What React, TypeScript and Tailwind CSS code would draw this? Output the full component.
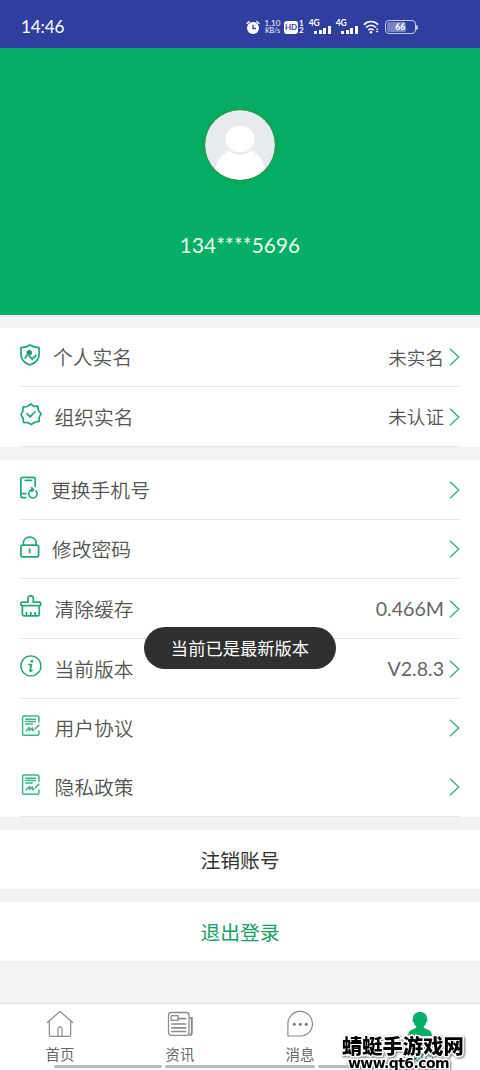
import React from "react";

type RowItem = {
  label: string;
  icon: React.ReactNode;
  gap: string;
  height: string;
  value?: string;
  latin?: boolean;
  divider?: boolean;
};

function RowIcon({ children }: { children: React.ReactNode }) {
  return (
    <svg
      className="mb-[3px] h-6 w-6 shrink-0"
      viewBox="0 0 24 24"
      fill="none"
      stroke="#22a873"
      strokeWidth="1.75"
      strokeLinecap="round"
      strokeLinejoin="round"
    >
      {children}
    </svg>
  );
}

function ShieldIcon() {
  return (
    <RowIcon>
      <path d="M10 .9C7.500 2.500 4.500 3.300 1 3.600V11c0 4.800 3.500 8 9 10 5.500-2 9-5.200 9-10V3.600C15.500 3.300 12.500 2.500 10 .9Z" />
      <circle cx="9.300" cy="8.600" r="2.700" fill="#129c62" stroke="none" />
      <path d="M5.300 14.200c.3-2 1.500-3.100 3.200-3.400M9.500 12.400l2.700 2.600 3.700-3.500" />
    </RowIcon>
  );
}

function SealIcon() {
  return (
    <RowIcon>
      <path d="M10.800 1l3 2.300 4-.1.500 4L21 10.800l-1.900 3.600.1 3.900-4 .7-3.900 2.600-3.600-2-4.200-.3-.4-4L.9 11.600l2-3.500L3 4.200l4.200-.7L10.800 1Z" />
      <path d="M7.200 10.800l3 3 4.600-4.800" />
    </RowIcon>
  );
}

function PhoneIcon() {
  return (
    <RowIcon>
      <path d="M15.200 10.500V3.200c0-1.300-.6-1.900-1.900-1.900H2.800C1.500 1.300.9 1.900.9 3.200v16.600c0 1.300.6 1.900 1.900 1.900h3M1.200 17.600h4.800M5.300 4.300h6.200" />
      <path d="M15.900 14.800a4.200 4.200 0 1 1-3.200-1.200M11.600 11.800l2.100 1.800-1.900 1.900" strokeWidth="1.600" />
    </RowIcon>
  );
}

function LockIcon() {
  return (
    <RowIcon>
      <rect x=".9" y="9" width="17.700" height="11.900" rx="1.800" />
      <path d="M3.400 9V7.300C3.400 3.600 6 1 9.700 1s6.400 2.600 6.400 6.300V9M9.700 13.200v3.400" />
    </RowIcon>
  );
}

function BrushIcon() {
  return (
    <RowIcon>
      <path d="M8 7.200V3.100C8 1.700 9.100.8 10.700.8s2.600.9 2.600 2.300v4.100h6.100c.9 0 1.300.4 1.300 1.200v1c0 .8-.4 1.200-1.300 1.200H2.200C1.300 10.600.9 10.200.9 9.400v-1c0-.8.4-1.200 1.300-1.200H8ZM2.400 10.600v8.700c0 1 .5 1.600 1.500 1.600h13.900c1 0 1.500-.6 1.500-1.600v-8.700M6.500 17.500v3M10.800 17.500v3M15.100 17.500v3" />
    </RowIcon>
  );
}

function InfoIcon() {
  return (
    <RowIcon>
      <circle cx="10.900" cy="10.900" r="10" strokeWidth="1.400" />
      <circle cx="12" cy="6.300" r="1.400" fill="#22a873" stroke="none" />
      <path d="M9.200 9.700h2.200l-1.400 5.800c-.2.900.7.700 2-.2" />
    </RowIcon>
  );
}

function DocIcon() {
  return (
    <RowIcon>
      <g stroke="#3bb483" strokeWidth="1.500">
        <path d="M18.900 7.300V2.200c0-.8-.4-1.200-1.200-1.200H3.800C3 1 2.600 1.400 2.600 2.200v16.900c0 .8.4 1.200 1.200 1.200h13.900c.8 0 1.200-.4 1.200-1.200v-3" />
        <path d="M5.700 4.300h9.800M5.700 6.600h9.800M5.700 8.900h6.500M6.200 15.800l3.200-3.300.1 3 2.900-2.600.2 2.700 1.300-.6M15.200 13.800l3.700-3.700" />
      </g>
    </RowIcon>
  );
}

const identityRows: RowItem[] = [
  { label: "个人实名", icon: <ShieldIcon />, gap: "ml-[9px]", height: "h-[59px]", value: "未实名", divider: true },
  { label: "组织实名", icon: <SealIcon />, gap: "ml-[10.5px]", height: "h-[60px]", value: "未认证", divider: true },
];

const settingRows: RowItem[] = [
  { label: "更换手机号", icon: <PhoneIcon />, gap: "ml-[7px]", height: "h-[60px]", divider: true },
  { label: "修改密码", icon: <LockIcon />, gap: "ml-2", height: "h-[59px]", divider: true },
  { label: "清除缓存", icon: <BrushIcon />, gap: "ml-[10.5px]", height: "h-[60px]", value: "0.466M", latin: true, divider: true },
  { label: "当前版本", icon: <InfoIcon />, gap: "ml-[10.5px]", height: "h-[60px]", value: "V2.8.3", latin: true, divider: true },
  { label: "用户协议", icon: <DocIcon />, gap: "ml-[10.5px]", height: "h-[59px]" },
  { label: "隐私政策", icon: <DocIcon />, gap: "ml-[10.5px]", height: "h-[59px]", divider: true },
];

function SettingRow({ item }: { item: RowItem }) {
  return (
    <div className={`${item.height} px-5`}>
      <div className={`flex h-full items-center border-b ${item.divider ? "border-[#e7e7e7]" : "border-transparent"}`}>
        {item.icon}
        <span className={`${item.gap} text-[19.8px] leading-none font-[350] text-[#555]`}>{item.label}</span>
        {item.value && (
          <span
            className={
              item.latin
                ? "ml-auto font-['Lato','Noto_Sans_CJK_SC',sans-serif] text-[19.6px] leading-none text-[#666]"
                : "ml-auto text-[18.6px] leading-none font-[350] text-[#555]"
            }
          >
            {item.value}
          </span>
        )}
        <svg className={`${item.value ? "ml-[5px]" : "ml-auto"} h-[18px] w-[11px]`} viewBox="0 0 11 18" fill="none" stroke="#35ae7b" strokeWidth="1.300">
          <path d="M1 .7 9.800 9 1 17.300" />
        </svg>
      </div>
    </div>
  );
}

function Signal() {
  return (
    <div className="ml-[5px] flex h-[14px] w-[22px] flex-col">
      <span className="text-[8.5px] leading-[7px] font-bold">4G</span>
      <div className="-mt-px flex h-[8px] items-end gap-[1.5px] self-end">
        <i className="h-[3px] w-[3px] bg-white" />
        <i className="h-1 w-[3px] bg-white" />
        <i className="h-[6px] w-[3px] bg-white" />
        <i className="h-2 w-[3px] bg-white" />
      </div>
    </div>
  );
}

function StatusBar() {
  return (
    <div className="flex h-12 items-center bg-[#303f9f] pt-[6px] pl-[21px] font-['Lato','Noto_Sans_CJK_SC',sans-serif] text-white">
      <span className="w-[225px] text-[17.2px] leading-none tracking-[-0.2px]">14:46</span>
      <svg className="h-[15px] w-[14px]" viewBox="0 0 14 15">
        <circle cx="7" cy="8" r="6" fill="white" />
        <path d="M.7 3.700 3.600 1.200M13.300 3.700 10.400 1.200" stroke="white" strokeWidth="1.500" />
        <path d="M7 4.700v3.800h2.900" fill="none" stroke="#303f9f" strokeWidth="1.300" />
      </svg>
      <div className="ml-1 w-[17px] text-center text-[8px] leading-[7px]">
        <div>1.10</div>
        <div className="text-[7px]">KB/s</div>
      </div>
      <div className="ml-[3px] flex h-[13px] w-[14px] items-center justify-center rounded-[3px] bg-white text-[8px] font-bold text-[#303f9f]">HD</div>
      <div className="ml-px text-[8px] leading-[7px] font-bold">
        <div>1</div>
        <div>2</div>
      </div>
      <Signal />
      <Signal />
      <svg className="ml-[5px] h-[14px] w-[17px]" viewBox="0 0 17 14" fill="none" stroke="white" strokeWidth="1.700">
        <path d="M.8 4.700C5 .4 11 .4 15.200 4.700M3 7.500c3-3 7-3 10 0M5.400 10.100c1.500-1.500 3.700-1.500 5.200 0" />
        <circle cx="8" cy="12.200" r="1.300" fill="white" stroke="none" />
        <path d="m12.600 9.700 1.500-1.700 1.500 1.700ZM12.600 11l1.500 1.700 1.500-1.700Z" fill="white" stroke="none" />
      </svg>
      <div className="ml-[5px] flex items-center">
        <div className="relative flex h-[14px] w-[31px] items-center justify-center rounded-[4px] border border-[#c6cbed]">
          <div className="absolute inset-y-px left-px w-[19px] rounded-[2px] bg-[#7983c5]" />
          <span className="relative text-[8.5px] leading-none font-bold">66</span>
        </div>
        <div className="h-[5px] w-[2px] rounded-r-sm bg-[#c6cbed]" />
      </div>
    </div>
  );
}

function Profile() {
  return (
    <header className="flex h-[267px] flex-col items-center bg-[#04ae66] pt-[62px]">
      <svg className="h-[70px] w-[70px] rounded-full shadow-[0_0_5px_1px_rgba(75,130,55,0.6)]" viewBox="0 0 70 70">
        <clipPath id="avatar">
          <circle cx="35" cy="35" r="35" />
        </clipPath>
        <g clipPath="url(#avatar)">
          <path d="M0 0h70v70H0Z" fill="#e7ebed" />
          <path d="M9 61C12 50 17 44 24 40.500h22C53 44 58 50 61 61v10H9Z" fill="white" />
          <ellipse cx="35" cy="29.500" rx="16" ry="15.200" fill="#e7ebed" />
          <ellipse cx="35" cy="29" rx="14.500" ry="13.300" fill="white" />
        </g>
      </svg>
      <div className="mt-[54px] font-['Lato',sans-serif] text-[20.7px] leading-[22px] tracking-[0.1px] text-[#e5fff2]">134****5696</div>
    </header>
  );
}

const tabs = [
  {
    label: "首页",
    icon: (
      <svg className="h-7 w-7" viewBox="0 0 28 28" fill="none" stroke="#8c8c8c" strokeWidth="1.200" strokeLinejoin="round">
        <path d="M1 12.800 14 1.500l13 11.300M3.300 11v14c0 .8.400 1.300 1.200 1.300h19c.8 0 1.200-.5 1.200-1.300V11M12 26.300v-7.500c0-1.300.8-2 2-2s2 .7 2 2v7.500" />
      </svg>
    ),
  },
  {
    label: "资讯",
    icon: (
      <svg className="h-7 w-7" viewBox="0 0 28 28" fill="none" stroke="#8c8c8c" strokeWidth="1.300">
        <rect x="2.500" y="2.500" width="20.500" height="22.800" rx="2.500" />
        <path d="M23.800 8h2v14.800c0 1.400-.8 2.300-2.500 2.500" strokeWidth="1.900" />
        <rect x="5.200" y="5.700" width="6.800" height="4.600" />
        <path d="M12 8.700h8.300M5.200 14h15.100M5.200 17.800h15.100M5.200 21.500h15.100" strokeWidth="1.700" />
      </svg>
    ),
  },
  {
    label: "消息",
    icon: (
      <svg className="h-7 w-7" viewBox="0 0 28 28" fill="none" stroke="#8c8c8c" strokeWidth="1.200">
        <path d="M1.900 26V14.200A12.300 12.300 0 1 1 14.200 26Z" />
        <g fill="#777" stroke="none">
          <circle cx="8.300" cy="14.300" r="1.500" />
          <circle cx="14.300" cy="14.300" r="1.500" />
          <circle cx="20.300" cy="14.300" r="1.500" />
        </g>
      </svg>
    ),
  },
  {
    label: "我的",
    active: true,
    icon: (
      <svg className="h-7 w-7" viewBox="0 0 28 28" fill="#04ae66">
        <path d="M14 2c-4.500 0-7 2.600-7 6.500-.8 1.300-.4 3.200.8 4 .4 2 1.500 3.200 2.700 4.300-.2 1.200-1.700 1.800-4 2.600-3 1-4.500 3-4.500 6.500h24c0-3.500-1.500-5.500-4.500-6.500-2.300-.8-3.800-1.400-4-2.600 1.200-1.100 2.300-2.300 2.700-4.300 1.200-.8 1.600-2.700.8-4C21 4.600 18.500 2 14 2Z" />
      </svg>
    ),
  },
];

const outline =
  "[paint-order:stroke_fill] [-webkit-text-stroke:3px_white] [filter:drop-shadow(1px_1px_1px_rgba(0,0,0,0.55))]";

export default function App() {
  return (
    <div className="relative flex h-[1070px] w-[480px] flex-col overflow-hidden bg-[#f2f2f2] font-['Noto_Sans_CJK_SC',sans-serif]">
      <StatusBar />
      <Profile />

      <section className="mt-[13px] bg-white">
        {identityRows.map((item) => (
          <SettingRow key={item.label} item={item} />
        ))}
      </section>

      <section className="mt-[13px] bg-white">
        {settingRows.map((item) => (
          <SettingRow key={item.label} item={item} />
        ))}
      </section>

      <button className="mt-[13px] h-[59px] shrink-0 bg-white text-[19.8px] text-[#333]">注销账号</button>
      <button className="mt-[13px] h-[59px] shrink-0 bg-white text-[19.8px] text-[#159f67]">退出登录</button>

      <nav className="mt-auto grid h-[67px] shrink-0 grid-cols-4 border-t border-[#dedede] bg-white">
        {tabs.map((tab) => (
          <div key={tab.label} className="flex flex-col items-center pt-[6px]">
            {tab.icon}
            <span className={`mt-2 text-[14.4px] leading-[15px] ${tab.active ? "text-[#04ae66]" : "text-[#666]"}`}>{tab.label}</span>
          </div>
        ))}
      </nav>

      {/* Version toast */}
      <div className="absolute top-[627px] left-[144px] flex h-[42px] w-[192px] items-center justify-center rounded-full bg-[#303030] text-[17.3px] text-white">
        当前已是最新版本
      </div>

      {/* Gesture hints */}
      <div className="absolute top-[1065px] left-[54px] flex h-[3px] gap-[3px]">
        <div className="w-[108px] rounded-full bg-[#bababa]" />
        <div className="w-[150px] rounded-full bg-[#bababa]" />
        <div className="w-[108px] rounded-full bg-[#bababa]" />
      </div>

      {/* Site mark */}
      <div className="absolute top-[1034px] left-[342px] whitespace-nowrap text-black">
        <div className={`text-[20.3px] leading-[22px] font-black ${outline}`}>蜻蜓手游戏网</div>
        <div className={`ml-[6px] font-['DejaVu_Sans',sans-serif] text-[14px] leading-[14px] font-bold tracking-[-0.6px] ${outline}`}>www.qt6.com</div>
      </div>
    </div>
  );
}
